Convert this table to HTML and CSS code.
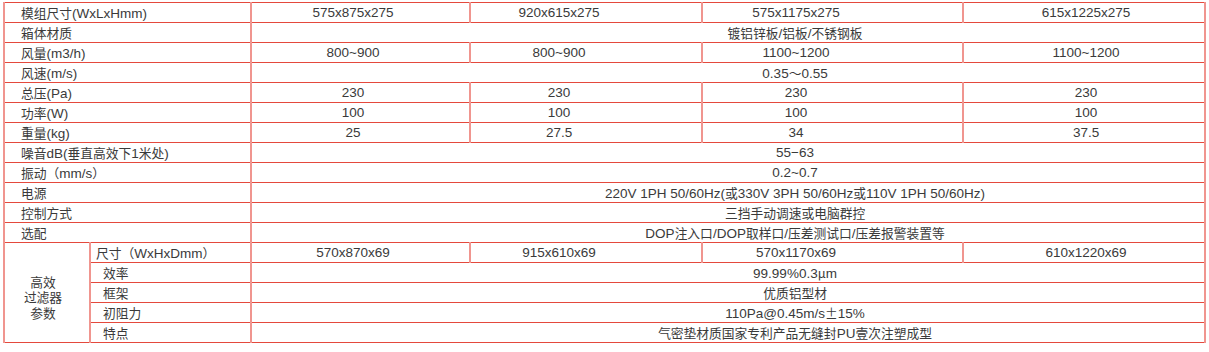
FILE: index.html
```html
<!DOCTYPE html>
<html lang="zh">
<head>
<meta charset="utf-8">
<title>参数表</title>
<link rel="stylesheet" href="styles.css">
</head>
<body>
<table class="spec">
  <colgroup>
    <col class="w-a"><col class="w-b"><col class="w-2"><col class="w-3"><col class="w-4"><col class="w-5">
  </colgroup>
  <tbody>
    <tr><td colspan="2" class="lbl"><span class="z">模组尺寸</span>(WxLxHmm)</td><td class="c2">575x875x275</td><td class="c3">920x615x275</td><td class="c4">575x1175x275</td><td class="c5">615x1225x275</td></tr>
    <tr><td colspan="2" class="lbl"><span class="z">箱体材质</span></td><td colspan="4" class="all"><span class="z">镀铝锌板</span>/<span class="z">铝板</span>/<span class="z">不锈钢板</span></td></tr>
    <tr><td colspan="2" class="lbl"><span class="z">风量</span>(m3/h)</td><td class="c2">800~900</td><td class="c3">800~900</td><td class="c4">1100~1200</td><td class="c5">1100~1200</td></tr>
    <tr><td colspan="2" class="lbl"><span class="z">风速</span>(m/s)</td><td colspan="4" class="all">0.35<span class="z">～</span>0.55</td></tr>
    <tr><td colspan="2" class="lbl"><span class="z">总压</span>(Pa)</td><td class="c2">230</td><td class="c3">230</td><td class="c4">230</td><td class="c5">230</td></tr>
    <tr><td colspan="2" class="lbl"><span class="z">功率</span>(W)</td><td class="c2">100</td><td class="c3">100</td><td class="c4">100</td><td class="c5">100</td></tr>
    <tr><td colspan="2" class="lbl"><span class="z">重量</span>(kg)</td><td class="c2">25</td><td class="c3">27.5</td><td class="c4">34</td><td class="c5">37.5</td></tr>
    <tr><td colspan="2" class="lbl"><span class="z">噪音</span>dB(<span class="z">垂直高效下</span>1<span class="z">米处</span>)</td><td colspan="4" class="all">55−63</td></tr>
    <tr><td colspan="2" class="lbl"><span class="z">振动（</span>mm/s<span class="z">）</span></td><td colspan="4" class="all">0.2~0.7</td></tr>
    <tr><td colspan="2" class="lbl"><span class="z">电源</span></td><td colspan="4" class="all">220V 1PH 50/60Hz(<span class="z">或</span>330V 3PH 50/60Hz<span class="z">或</span>110V 1PH 50/60Hz)</td></tr>
    <tr><td colspan="2" class="lbl"><span class="z">控制方式</span></td><td colspan="4" class="all"><span class="z">三挡手动调速或电脑群控</span></td></tr>
    <tr><td colspan="2" class="lbl"><span class="z">选配</span></td><td colspan="4" class="all">DOP<span class="z">注入口</span>/DOP<span class="z">取样口</span>/<span class="z">压差测试口</span>/<span class="z">压差报警装置等</span></td></tr>
    <tr><td rowspan="5" class="grp"><span class="z gl">高效</span><span class="z gl">过滤器</span><span class="z gl">参数</span></td><td class="sub1"><span class="z">尺寸（</span>WxHxDmm<span class="z">）</span></td><td class="c2">570x870x69</td><td class="c3">915x610x69</td><td class="c4">570x1170x69</td><td class="c5">610x1220x69</td></tr>
    <tr><td class="sub"><span class="z">效率</span></td><td colspan="4" class="all">99.99%0.3<span class="z">μ</span>m</td></tr>
    <tr><td class="sub"><span class="z">框架</span></td><td colspan="4" class="all"><span class="z">优质铝型材</span></td></tr>
    <tr><td class="sub"><span class="z">初阻力</span></td><td colspan="4" class="all">110Pa@0.45m/s<span class="z">±</span>15%</td></tr>
    <tr><td class="sub"><span class="z">特点</span></td><td colspan="4" class="all"><span class="z">气密垫材质国家专利产品无缝封</span>PU<span class="z">壹次注塑成型</span></td></tr>
  </tbody>
</table>
</body>
</html>
```

FILE: styles.css
```css
html, body {
  margin: 0;
  padding: 0;
  background: #ffffff;
}

body {
  font-family: "Liberation Sans", Arial, "Noto Sans CJK SC", sans-serif;
  font-size: 13.5px;
  color: #3a3a3a;
}

.spec {
  border-collapse: collapse;
  table-layout: fixed;
  width: 1202px;
  margin: 2px 0 0 3px;
}

.w-a { width: 86px; }
.w-b { width: 161px; }
.w-2 { width: 219px; }
.w-3 { width: 232px; }
.w-4 { width: 261px; }
.w-5 { width: 242px; }

.spec tr {
  height: 20px;
}

.spec td {
  padding: 1px 0 0 0;
  height: 18px;
  line-height: 14px;
  white-space: nowrap;
  border-top: 1px solid #e4493d;
  border-bottom: 1px solid #e4493d;
  border-left: 2px solid #f0958f;
  border-right: 2px solid #f0958f;
  text-align: center;
  vertical-align: middle;
}

.z {
  font-family: "Noto Sans CJK SC", "Liberation Sans", sans-serif;
  font-size: 12.75px;
  line-height: 14px;
}

.spec td.lbl {
  text-align: left;
  padding-left: 16px;
}

.spec td.sub1 {
  text-align: left;
  padding-left: 5px;
}

.spec td.sub {
  text-align: left;
  padding-left: 12px;
}

.spec td.grp {
  padding-top: 9px;
  padding-right: 8px;
}

.gl {
  display: block;
  line-height: 15.5px;
}

.spec td.c2 { padding-right: 15px; }
.spec td.c3 { padding-right: 54px; }
.spec td.c4 { padding-right: 73px; }
.spec td.c5 { padding-left: 4px; }
.spec td.all { padding-left: 134px; }
```
